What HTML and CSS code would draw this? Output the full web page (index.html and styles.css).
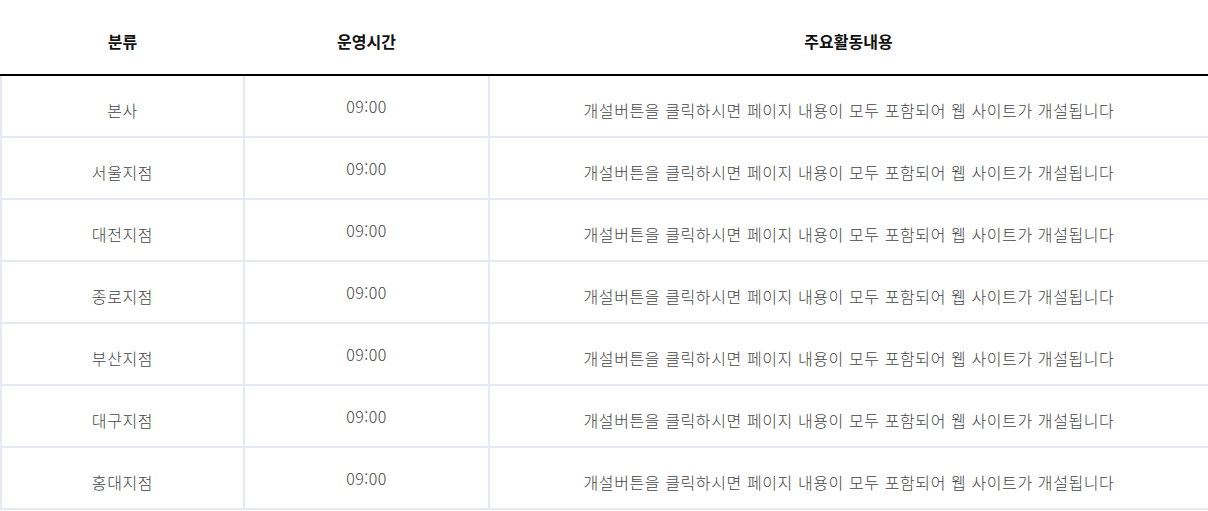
FILE: index.html
```html
<!DOCTYPE html>
<html lang="ko">
<head>
    <meta charset="UTF-8">
    <meta name="viewport" content="width=device-width, initial-scale=1.0">
    <title>지점 안내</title>
    <link rel="stylesheet" href="styles.css">
</head>
<body>
    <table class="branch-table">
        <colgroup>
            <col class="col-type">
            <col class="col-time">
            <col class="col-desc">
        </colgroup>
        <thead>
            <tr>
                <th>분류</th>
                <th>운영시간</th>
                <th>주요활동내용</th>
            </tr>
        </thead>
        <tbody>
            <tr>
                <td>본사</td>
                <td class="time">09:00</td>
                <td>개설버튼을 클릭하시면 페이지 내용이 모두 포함되어 웹 사이트가 개설됩니다</td>
            </tr>
            <tr>
                <td>서울지점</td>
                <td class="time">09:00</td>
                <td>개설버튼을 클릭하시면 페이지 내용이 모두 포함되어 웹 사이트가 개설됩니다</td>
            </tr>
            <tr>
                <td>대전지점</td>
                <td class="time">09:00</td>
                <td>개설버튼을 클릭하시면 페이지 내용이 모두 포함되어 웹 사이트가 개설됩니다</td>
            </tr>
            <tr>
                <td>종로지점</td>
                <td class="time">09:00</td>
                <td>개설버튼을 클릭하시면 페이지 내용이 모두 포함되어 웹 사이트가 개설됩니다</td>
            </tr>
            <tr>
                <td>부산지점</td>
                <td class="time">09:00</td>
                <td>개설버튼을 클릭하시면 페이지 내용이 모두 포함되어 웹 사이트가 개설됩니다</td>
            </tr>
            <tr>
                <td>대구지점</td>
                <td class="time">09:00</td>
                <td>개설버튼을 클릭하시면 페이지 내용이 모두 포함되어 웹 사이트가 개설됩니다</td>
            </tr>
            <tr>
                <td>홍대지점</td>
                <td class="time">09:00</td>
                <td>개설버튼을 클릭하시면 페이지 내용이 모두 포함되어 웹 사이트가 개설됩니다</td>
            </tr>
        </tbody>
    </table>
</body>
</html>
```

FILE: styles.css
```css
* {
    margin: 0;
    padding: 0;
    box-sizing: border-box;
}

body {
    font-family: "Noto Sans CJK KR", "Noto Sans", sans-serif;
    background: #fff;
    color: #333;
}

.branch-table {
    width: 100%;
    border-collapse: collapse;
    table-layout: fixed;
}

.col-type {
    width: 243px;
}

.col-time {
    width: 245px;
}

.branch-table th {
    height: 75px;
    padding-top: 8px;
    font-size: 16px;
    font-weight: 700;
    color: #111;
    text-align: center;
    border-bottom: 2px solid #000;
}

.branch-table td {
    height: 62px;
    padding-top: 8px;
    font-size: 16px;
    letter-spacing: 0.6px;
    font-weight: 300;
    color: #444;
    text-align: center;
    border: 2px solid #e8e8f3;
}

.branch-table td.time {
    padding-top: 0;
    letter-spacing: 0.4px;
}

.branch-table tbody tr:first-child td {
    border-top: none;
}

.branch-table td:last-child {
    border-right: none;
}
```
